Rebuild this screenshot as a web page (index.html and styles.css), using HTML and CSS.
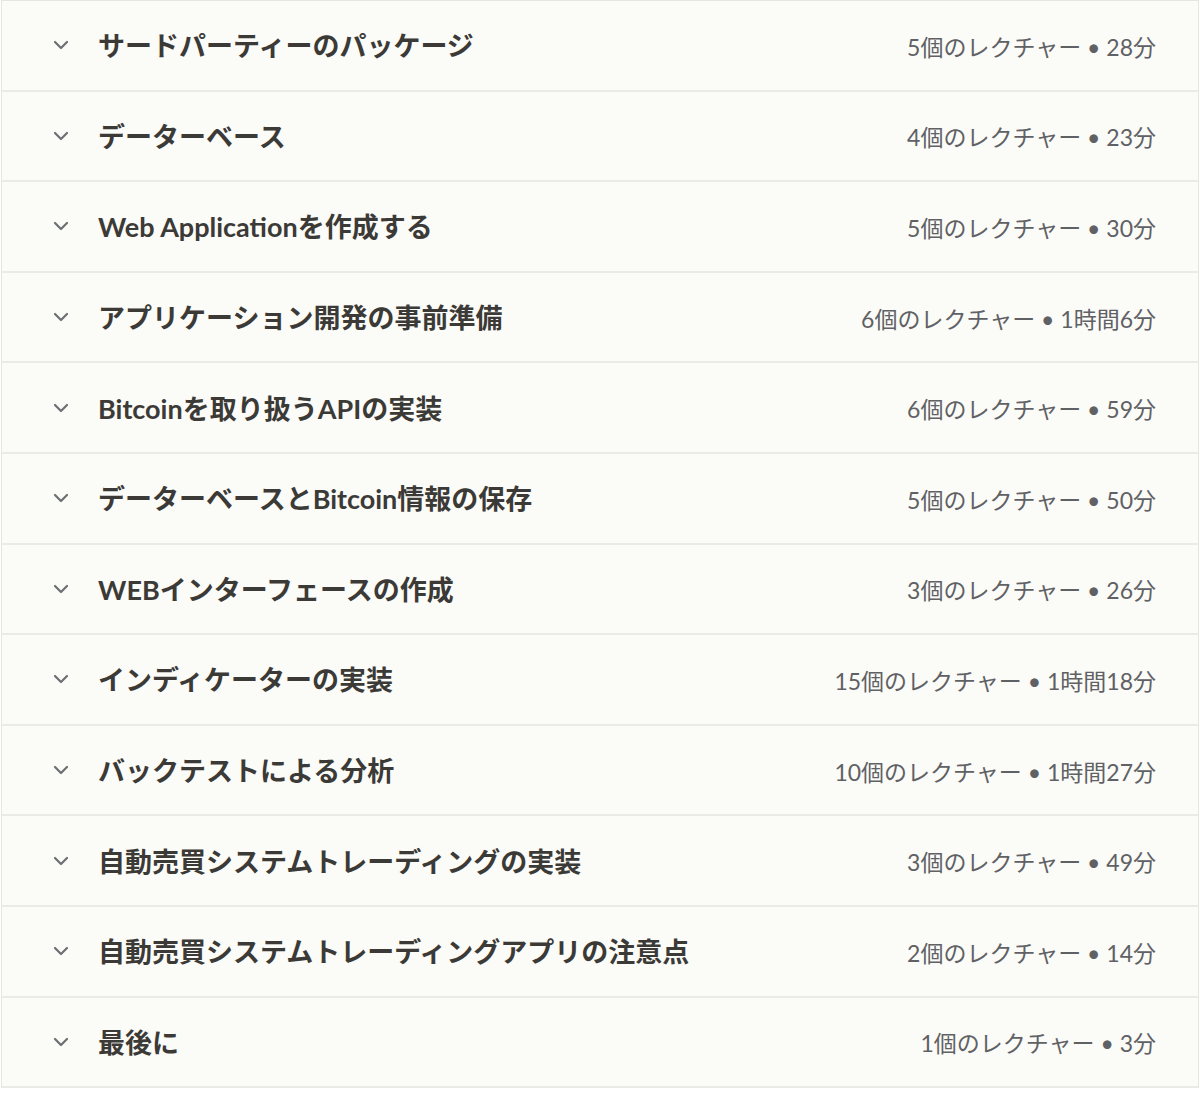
FILE: index.html
```html
<!DOCTYPE html>
<html lang=ja><head>
<meta charset=UTF-8>
<meta name=viewport content="width=device-width,initial-scale=1">
<title>コース内容</title><link rel="stylesheet" href="styles.css"></head><body>
<div class=curriculum>
<div class=section><span class=chev><svg viewBox="0 0 16 10" width=16 height=10><path d="M2 2l6 6 6-6" fill=none stroke=currentColor stroke-width=2.2 stroke-linecap=round stroke-linejoin=round /></svg></span><span class=title>サードパーティーのパッケージ</span><span class=meta>5個のレクチャー • 28分</span></div>
<div class=section><span class=chev><svg viewBox="0 0 16 10" width=16 height=10><path d="M2 2l6 6 6-6" fill=none stroke=currentColor stroke-width=2.2 stroke-linecap=round stroke-linejoin=round /></svg></span><span class=title>データーベース</span><span class=meta>4個のレクチャー • 23分</span></div>
<div class=section><span class=chev><svg viewBox="0 0 16 10" width=16 height=10><path d="M2 2l6 6 6-6" fill=none stroke=currentColor stroke-width=2.2 stroke-linecap=round stroke-linejoin=round /></svg></span><span class=title>Web Applicationを作成する</span><span class=meta>5個のレクチャー • 30分</span></div>
<div class=section><span class=chev><svg viewBox="0 0 16 10" width=16 height=10><path d="M2 2l6 6 6-6" fill=none stroke=currentColor stroke-width=2.2 stroke-linecap=round stroke-linejoin=round /></svg></span><span class=title>アプリケーション開発の事前準備</span><span class=meta>6個のレクチャー • 1時間6分</span></div>
<div class=section><span class=chev><svg viewBox="0 0 16 10" width=16 height=10><path d="M2 2l6 6 6-6" fill=none stroke=currentColor stroke-width=2.2 stroke-linecap=round stroke-linejoin=round /></svg></span><span class=title>Bitcoinを取り扱うAPIの実装</span><span class=meta>6個のレクチャー • 59分</span></div>
<div class=section><span class=chev><svg viewBox="0 0 16 10" width=16 height=10><path d="M2 2l6 6 6-6" fill=none stroke=currentColor stroke-width=2.2 stroke-linecap=round stroke-linejoin=round /></svg></span><span class=title>データーベースとBitcoin情報の保存</span><span class=meta>5個のレクチャー • 50分</span></div>
<div class=section><span class=chev><svg viewBox="0 0 16 10" width=16 height=10><path d="M2 2l6 6 6-6" fill=none stroke=currentColor stroke-width=2.2 stroke-linecap=round stroke-linejoin=round /></svg></span><span class=title>WEBインターフェースの作成</span><span class=meta>3個のレクチャー • 26分</span></div>
<div class=section><span class=chev><svg viewBox="0 0 16 10" width=16 height=10><path d="M2 2l6 6 6-6" fill=none stroke=currentColor stroke-width=2.2 stroke-linecap=round stroke-linejoin=round /></svg></span><span class=title>インディケーターの実装</span><span class=meta>15個のレクチャー • 1時間18分</span></div>
<div class=section><span class=chev><svg viewBox="0 0 16 10" width=16 height=10><path d="M2 2l6 6 6-6" fill=none stroke=currentColor stroke-width=2.2 stroke-linecap=round stroke-linejoin=round /></svg></span><span class=title>バックテストによる分析</span><span class=meta>10個のレクチャー • 1時間27分</span></div>
<div class=section><span class=chev><svg viewBox="0 0 16 10" width=16 height=10><path d="M2 2l6 6 6-6" fill=none stroke=currentColor stroke-width=2.2 stroke-linecap=round stroke-linejoin=round /></svg></span><span class=title>自動売買システムトレーディングの実装</span><span class=meta>3個のレクチャー • 49分</span></div>
<div class=section><span class=chev><svg viewBox="0 0 16 10" width=16 height=10><path d="M2 2l6 6 6-6" fill=none stroke=currentColor stroke-width=2.2 stroke-linecap=round stroke-linejoin=round /></svg></span><span class=title>自動売買システムトレーディングアプリの注意点</span><span class=meta>2個のレクチャー • 14分</span></div>
<div class=section><span class=chev><svg viewBox="0 0 16 10" width=16 height=10><path d="M2 2l6 6 6-6" fill=none stroke=currentColor stroke-width=2.2 stroke-linecap=round stroke-linejoin=round /></svg></span><span class=title>最後に</span><span class=meta>1個のレクチャー • 3分</span></div>
</div>
</body></html>
```
FILE: styles.css
```css
body{margin:0;background:#fff;font-family:Lato,"Noto Sans CJK JP",sans-serif}
.curriculum{width:1196px;margin:0 0 0 1px;border:1px solid #e6e6e1;border-bottom:none}
.section{display:flex;align-items:center;height:90.6px;box-sizing:border-box;background:#fbfbf8;border-bottom:2px solid #ebebe6;padding:0 42px 1px 51px}
.chev{color:#6c6f72;display:flex;width:45px;padding-top:1px}
.title{flex:1;font-size:27px;font-weight:700;color:#3b3a37}
.meta{font-size:23px;color:#5f6164;padding-top:2px}
```
